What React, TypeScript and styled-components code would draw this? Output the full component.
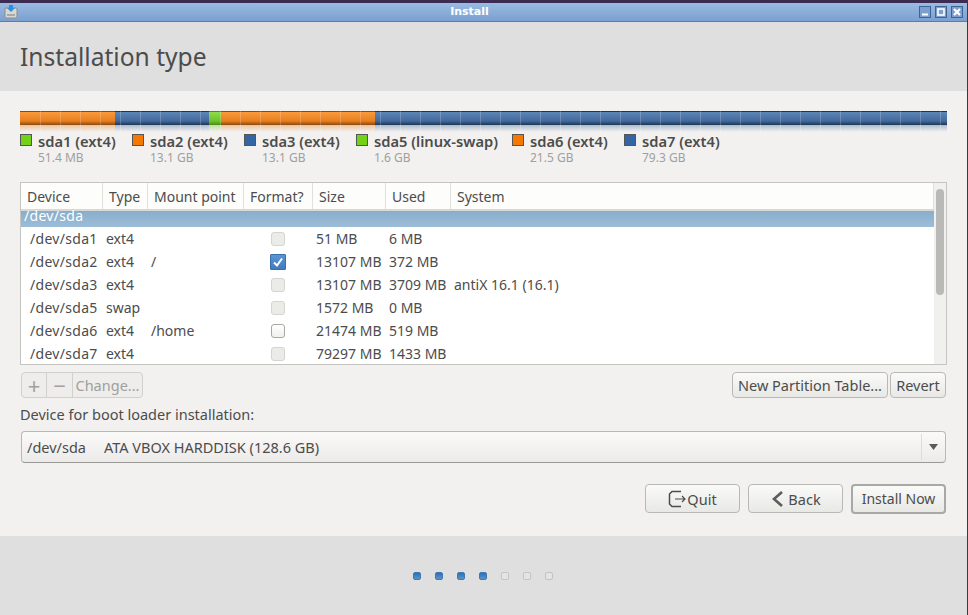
import { FC } from "react";
import styled, { createGlobalStyle } from "styled-components";

const GlobalStyle = createGlobalStyle`
	html, body {
		margin: 0;
		padding: 0;
		background: #dfdfdf;
	}
	* {
		box-sizing: border-box;
	}
`;

const segments = [
	{ color: "orange", width: 95 },
	{ color: "blue", width: 94 },
	{ color: "green", width: 12 },
	{ color: "orange", width: 154 },
	{ color: "blue", width: 572 },
];

const legend = [
	{ name: "sda1 (ext4)", size: "51.4 MB", color: "#73d216", width: 112 },
	{ name: "sda2 (ext4)", size: "13.1 GB", color: "#f57900", width: 112 },
	{ name: "sda3 (ext4)", size: "13.1 GB", color: "#3465a4", width: 112 },
	{ name: "sda5 (linux-swap)", size: "1.6 GB", color: "#73d216", width: 156 },
	{ name: "sda6 (ext4)", size: "21.5 GB", color: "#f57900", width: 112 },
	{ name: "sda7 (ext4)", size: "79.3 GB", color: "#3465a4", width: 112 },
];

const columns = ["Device", "Type", "Mount point", "Format?", "Size", "Used", "System"];

const rows = [
	{ device: "/dev/sda1", type: "ext4", mount: "", format: "off", size: "51 MB", used: "6 MB", system: "" },
	{ device: "/dev/sda2", type: "ext4", mount: "/", format: "on", size: "13107 MB", used: "372 MB", system: "" },
	{ device: "/dev/sda3", type: "ext4", mount: "", format: "off", size: "13107 MB", used: "3709 MB", system: "antiX 16.1 (16.1)" },
	{ device: "/dev/sda5", type: "swap", mount: "", format: "off", size: "1572 MB", used: "0 MB", system: "" },
	{ device: "/dev/sda6", type: "ext4", mount: "/home", format: "open", size: "21474 MB", used: "519 MB", system: "" },
	{ device: "/dev/sda7", type: "ext4", mount: "", format: "off", size: "79297 MB", used: "1433 MB", system: "" },
];

const GRID = "82px 45px 96px 69px 73px 65px 1fr";
const dots = [true, true, true, true, false, false, false];

const App: FC = () => (
	<Page>
		<GlobalStyle />
		<TopEdge />
		<TitleBar>
			<WindowIcon viewBox="0 0 14 14">
				<rect x="1" y="3" width="12" height="10" rx="1" fill="#d8d8d2" stroke="#8c8c88" />
				<rect x="3" y="9" width="8" height="2" fill="#a9a9a5" />
				<path d="M5 0h4v3h2L7 7 3 3h2z" fill="#2f8fdc" />
			</WindowIcon>
			<WindowTitle>Install</WindowTitle>
			<WindowButtons>
				<WindowButton>
					<svg viewBox="0 0 10 10" width="10" height="10">
						<rect x="2" y="6.5" width="6" height="2" fill="#fff" />
					</svg>
				</WindowButton>
				<WindowButton>
					<svg viewBox="0 0 10 10" width="10" height="10">
						<rect x="2" y="2" width="6" height="6" fill="none" stroke="#fff" strokeWidth="1.6" />
					</svg>
				</WindowButton>
				<WindowButton>
					<svg viewBox="0 0 10 10" width="10" height="10">
						<path d="M2 2l6 6M8 2l-6 6" stroke="#fff" strokeWidth="2.2" />
					</svg>
				</WindowButton>
			</WindowButtons>
		</TitleBar>
		<Header>
			<Title>Installation type</Title>
		</Header>
		<Content>
			<PartitionBar>
				{segments.map((s, i) => (
					<Segment key={i} $color={s.color} style={{ width: s.width }} />
				))}
			</PartitionBar>
			<Legend>
				{legend.map((l) => (
					<LegendItem key={l.name} style={{ width: l.width }}>
						<Swatch $color={l.color} />
						<LegendText>
							<LegendName>{l.name}</LegendName>
							<LegendSize>{l.size}</LegendSize>
						</LegendText>
					</LegendItem>
				))}
			</Legend>
			<TableFrame>
				<TableMain>
					<HeaderRow>
						{columns.map((c) => (
							<HeaderCell key={c}>{c}</HeaderCell>
						))}
					</HeaderRow>
					<DiskRow>/dev/sda</DiskRow>
					{rows.map((r) => (
						<Row key={r.device}>
							<DeviceCell>{r.device}</DeviceCell>
							<Cell>{r.type}</Cell>
							<Cell>{r.mount}</Cell>
							<CheckCell>
								<Check $state={r.format}>
									{r.format === "on" && (
										<svg viewBox="0 0 12 12" width="12" height="12">
											<path d="M2 6.5l3 3 5-7" fill="none" stroke="#fff" strokeWidth="2" />
										</svg>
									)}
								</Check>
							</CheckCell>
							<Cell>{r.size}</Cell>
							<Cell>{r.used}</Cell>
							<Cell>{r.system}</Cell>
						</Row>
					))}
				</TableMain>
				<ScrollTrack>
					<ScrollThumb />
				</ScrollTrack>
			</TableFrame>
			<Toolbar>
				<ButtonGroup>
					<GroupButton $width={25} $size={22}>+</GroupButton>
					<GroupButton $width={26} $size={22}>−</GroupButton>
					<GroupButton $width={69} $size={14.5}>Change...</GroupButton>
				</ButtonGroup>
				<ToolbarRight>
					<SmallButton $width={156}>New Partition Table...</SmallButton>
					<SmallButton $width={56}>Revert</SmallButton>
				</ToolbarRight>
			</Toolbar>
			<BootLabel>Device for boot loader installation:</BootLabel>
			<Select>
				<SelectText>
					<span>/dev/sda</span>
					<span>ATA VBOX HARDDISK (128.6 GB)</span>
				</SelectText>
				<SelectArrow>
					<svg viewBox="0 0 9 6" width="9" height="6">
						<path d="M0 0h9L4.5 6z" fill="#5a5a5a" />
					</svg>
				</SelectArrow>
			</Select>
			<Actions>
				<ActionButton>
					<svg viewBox="0 0 18 18" width="18" height="18">
						<path d="M13 1.5H4L1.5 4v10L4 16.5h9" fill="none" stroke="#4c4c4c" strokeWidth="1.5" />
						<path d="M7 9h10M14 6l3 3-3 3" fill="none" stroke="#4c4c4c" strokeWidth="1.2" />
					</svg>
					Quit
				</ActionButton>
				<ActionButton $gap={4}>
					<svg viewBox="0 0 14 18" width="14" height="18">
						<path d="M12 2L4 9l8 7" fill="none" stroke="#5c5c5c" strokeWidth="2.6" />
					</svg>
					Back
				</ActionButton>
				<DefaultButton>Install Now</DefaultButton>
			</Actions>
		</Content>
		<Footer>
			{dots.map((done, i) => (
				<Dot key={i} $done={done} />
			))}
		</Footer>
	</Page>
);

export default App;

const FONT = `"Noto Sans", "Open Sans", sans-serif`;

const Page = styled.div`
	width: 968px;
	height: 615px;
	display: flex;
	flex-direction: column;
	overflow: hidden;
	border-right: 1px solid #3a3a3a;
	font-family: ${FONT};
	font-size: 14.5px;
	color: #4c4c4c;
`;

const TopEdge = styled.div`
	height: 3px;
	background: #3d2c52;
`;

const TitleBar = styled.div`
	height: 19px;
	display: flex;
	align-items: center;
	padding: 0 4px;
	background: linear-gradient(#9abbe2, #7ba0d0);
	border-bottom: 1px solid #5a7ea8;
`;

const WindowIcon = styled.svg`
	width: 14px;
	height: 14px;
`;

const WindowTitle = styled.div`
	flex: 1;
	padding: 0 0 2px 2px;
	text-align: center;
	color: #fff;
	font-size: 11px;
	font-weight: 700;
	font-family: "DejaVu Sans", sans-serif;
`;

const WindowButtons = styled.div`
	display: flex;
	gap: 4px;
`;

const WindowButton = styled.div`
	width: 12px;
	height: 12px;
	display: flex;
	align-items: center;
	justify-content: center;
	border: 1px solid #3f6494;
	background: #7ba0d0;
`;

const Header = styled.div`
	height: 69px;
	display: flex;
	align-items: center;
	padding: 0 20px;
	background: #dfdfdf;
`;

const Title = styled.h1`
	margin: 0;
	font-size: 24.6px;
	font-weight: 400;
	color: #4c4c4c;
`;

const Content = styled.div`
	height: 445px;
	padding: 20px 20px 0;
	display: flex;
	flex-direction: column;
	background: #f2f1f0;
`;

const segmentColors: Record<string, [string, string, string]> = {
	orange: ["#fb9a3a", "#e67e22", "#8a4a0c"],
	blue: ["#5c86b8", "#44699c", "#1d3554"],
	green: ["#8fdc4a", "#6fc22a", "#4a8a14"],
};

const PartitionBar = styled.div`
	position: relative;
	display: flex;
	height: 21px;
	width: 927px;
	&::after {
		content: "";
		position: absolute;
		inset: 0 0 0 1px;
		background: repeating-linear-gradient(to right, transparent 0 19px, #ffffff33 19px 20px);
	}
`;

const Segment = styled.div<{ $color: string }>`
	height: 21px;
	background:
		linear-gradient(
			to bottom,
			transparent 14px,
			${(p) => segmentColors[p.$color][1]}66 14px,
			#f2f1f0 21px
		),
		linear-gradient(
			to bottom,
			${(p) => segmentColors[p.$color][2]} 0 1px,
			${(p) => segmentColors[p.$color][0]} 1px,
			${(p) => segmentColors[p.$color][1]} 10px,
			${(p) => segmentColors[p.$color][2]} 14px,
			transparent 14px
		);
`;

const Legend = styled.div`
	display: flex;
	height: 50px;
	padding-top: 1px;
`;

const LegendItem = styled.div`
	display: flex;
	gap: 6px;
`;

const Swatch = styled.div<{ $color: string }>`
	width: 12px;
	height: 12px;
	margin-top: 1px;
	background: ${(p) => p.$color};
	border: 1px solid #555;
`;

const LegendText = styled.div`
	display: flex;
	flex-direction: column;
`;

const LegendName = styled.div`
	font-size: 14.7px;
	font-weight: 600;
	line-height: 16px;
	white-space: nowrap;
`;

const LegendSize = styled.div`
	margin-top: 1px;
	font-size: 12px;
	color: #a0a09c;
	line-height: 16px;
`;

const TableFrame = styled.div`
	width: 927px;
	height: 183px;
	display: flex;
	border: 1px solid #c4c4c0;
	background: #fff;
	font-size: 14px;
`;

const TableMain = styled.div`
	width: 913px;
	display: flex;
	flex-direction: column;
	overflow: hidden;
`;

const HeaderRow = styled.div`
	display: grid;
	grid-template-columns: ${GRID};
	height: 28px;
	flex-shrink: 0;
	background: #fdfdfb;
	border-bottom: 2px solid #d8d8d4;
`;

const HeaderCell = styled.div`
	display: flex;
	align-items: center;
	padding-left: 6px;
	border-right: 1px solid #e0e0dc;
	white-space: nowrap;
`;

const DiskRow = styled.div`
	height: 16px;
	flex-shrink: 0;
	padding-left: 3px;
	line-height: 10px;
	letter-spacing: 0.3px;
	color: #fff;
	background: linear-gradient(#88aecb, #9cbdd8);
`;

const Row = styled.div`
	display: grid;
	grid-template-columns: ${GRID};
	height: 23px;
	flex-shrink: 0;
	align-items: center;
`;

const Cell = styled.div`
	padding-left: 3px;
	white-space: nowrap;
`;

const DeviceCell = styled(Cell)`
	padding-left: 9px;
	letter-spacing: 0.3px;
`;

const CheckCell = styled.div`
	display: flex;
	justify-content: center;
	padding-right: 2px;
`;

const Check = styled.div<{ $state: string }>`
	width: ${(p) => (p.$state === "on" ? 16 : 14)}px;
	height: ${(p) => (p.$state === "on" ? 16 : 14)}px;
	display: flex;
	align-items: center;
	justify-content: center;
	border-radius: ${(p) => (p.$state === "on" ? 1 : 3)}px;
	border: 1px solid ${(p) => (p.$state === "on" ? "#3a6ea8" : p.$state === "open" ? "#a8a8a4" : "#d4d4d0")};
	background: ${(p) =>
		p.$state === "on" ? "linear-gradient(#5a94d4, #3f7cc0)" : p.$state === "open" ? "linear-gradient(#fff, #f0f0ee)" : "#ebebe8"};
`;

const ScrollTrack = styled.div`
	flex: 1;
	padding: 6px 2px;
	background: #f0f0ee;
`;

const ScrollThumb = styled.div`
	width: 8px;
	height: 106px;
	border-radius: 4px;
	background: #b9b9b7;
`;

const Toolbar = styled.div`
	display: flex;
	justify-content: space-between;
	width: 926px;
	padding: 7px 0 0 1px;
`;

const ButtonGroup = styled.div`
	display: flex;
	height: 26px;
	border: 1px solid #d0d0cc;
	border-radius: 4px;
	background: #eeedeb;
`;

const GroupButton = styled.div<{ $width: number; $size: number }>`
	width: ${(p) => p.$width}px;
	display: flex;
	align-items: center;
	justify-content: center;
	font-size: ${(p) => p.$size}px;
	color: #a0a09c;
	border-right: 1px solid #d0d0cc;
	white-space: nowrap;
	&:last-child {
		border-right: 0;
	}
`;

const ToolbarRight = styled.div`
	display: flex;
	gap: 2px;
`;

const SmallButton = styled.div<{ $width: number }>`
	width: ${(p) => p.$width}px;
	height: 26px;
	display: flex;
	align-items: center;
	justify-content: center;
	white-space: nowrap;
	border: 1px solid #b8b8b4;
	border-radius: 4px;
	background: linear-gradient(#fafaf9, #e8e8e5);
`;

const BootLabel = styled.div`
	margin-top: 7px;
	height: 19px;
	line-height: 18px;
`;

const Select = styled.div`
	width: 925px;
	height: 32px;
	margin: 7px 0 0 1px;
	display: flex;
	align-items: center;
	justify-content: space-between;
	border: 1px solid #b8b8b4;
	border-bottom-color: #9a9a96;
	border-radius: 4px;
	background: linear-gradient(#fafaf9, #ecebe9);
`;

const SelectText = styled.div`
	display: flex;
	gap: 18px;
	padding: 0 0 1px 5px;
`;

const SelectArrow = styled.div`
	width: 24px;
	height: 26px;
	display: flex;
	align-items: center;
	justify-content: center;
	border-left: 1px solid #dcdcd8;
`;

const Actions = styled.div`
	display: flex;
	justify-content: flex-end;
	gap: 8px;
	width: 926px;
	margin-top: 21px;
`;

const ActionButton = styled.div<{ $gap?: number }>`
	width: 95px;
	height: 29px;
	display: flex;
	align-items: center;
	justify-content: center;
	gap: ${(p) => p.$gap ?? 1}px;
	border: 1px solid #b8b8b4;
	border-radius: 4px;
	background: linear-gradient(#fafaf9, #e8e8e5);
`;

const DefaultButton = styled(ActionButton)`
	height: 30px;
	border: 2px solid #a8a8a4;
	padding-bottom: 2px;
	font-size: 14px;
`;

const Footer = styled.div`
	flex: 1;
	display: flex;
	justify-content: center;
	gap: 14px;
	padding: 36px 1px 0 0;
	background: #dfdfdf;
`;

const Dot = styled.div<{ $done: boolean }>`
	width: 8px;
	height: 8px;
	border-radius: 2px;
	border: 1px solid ${(p) => (p.$done ? "#3f78b4" : "#c4c4c0")};
	background: ${(p) => (p.$done ? "linear-gradient(#2f70b0, #5a94cc)" : "#e4e4e2")};
`;
